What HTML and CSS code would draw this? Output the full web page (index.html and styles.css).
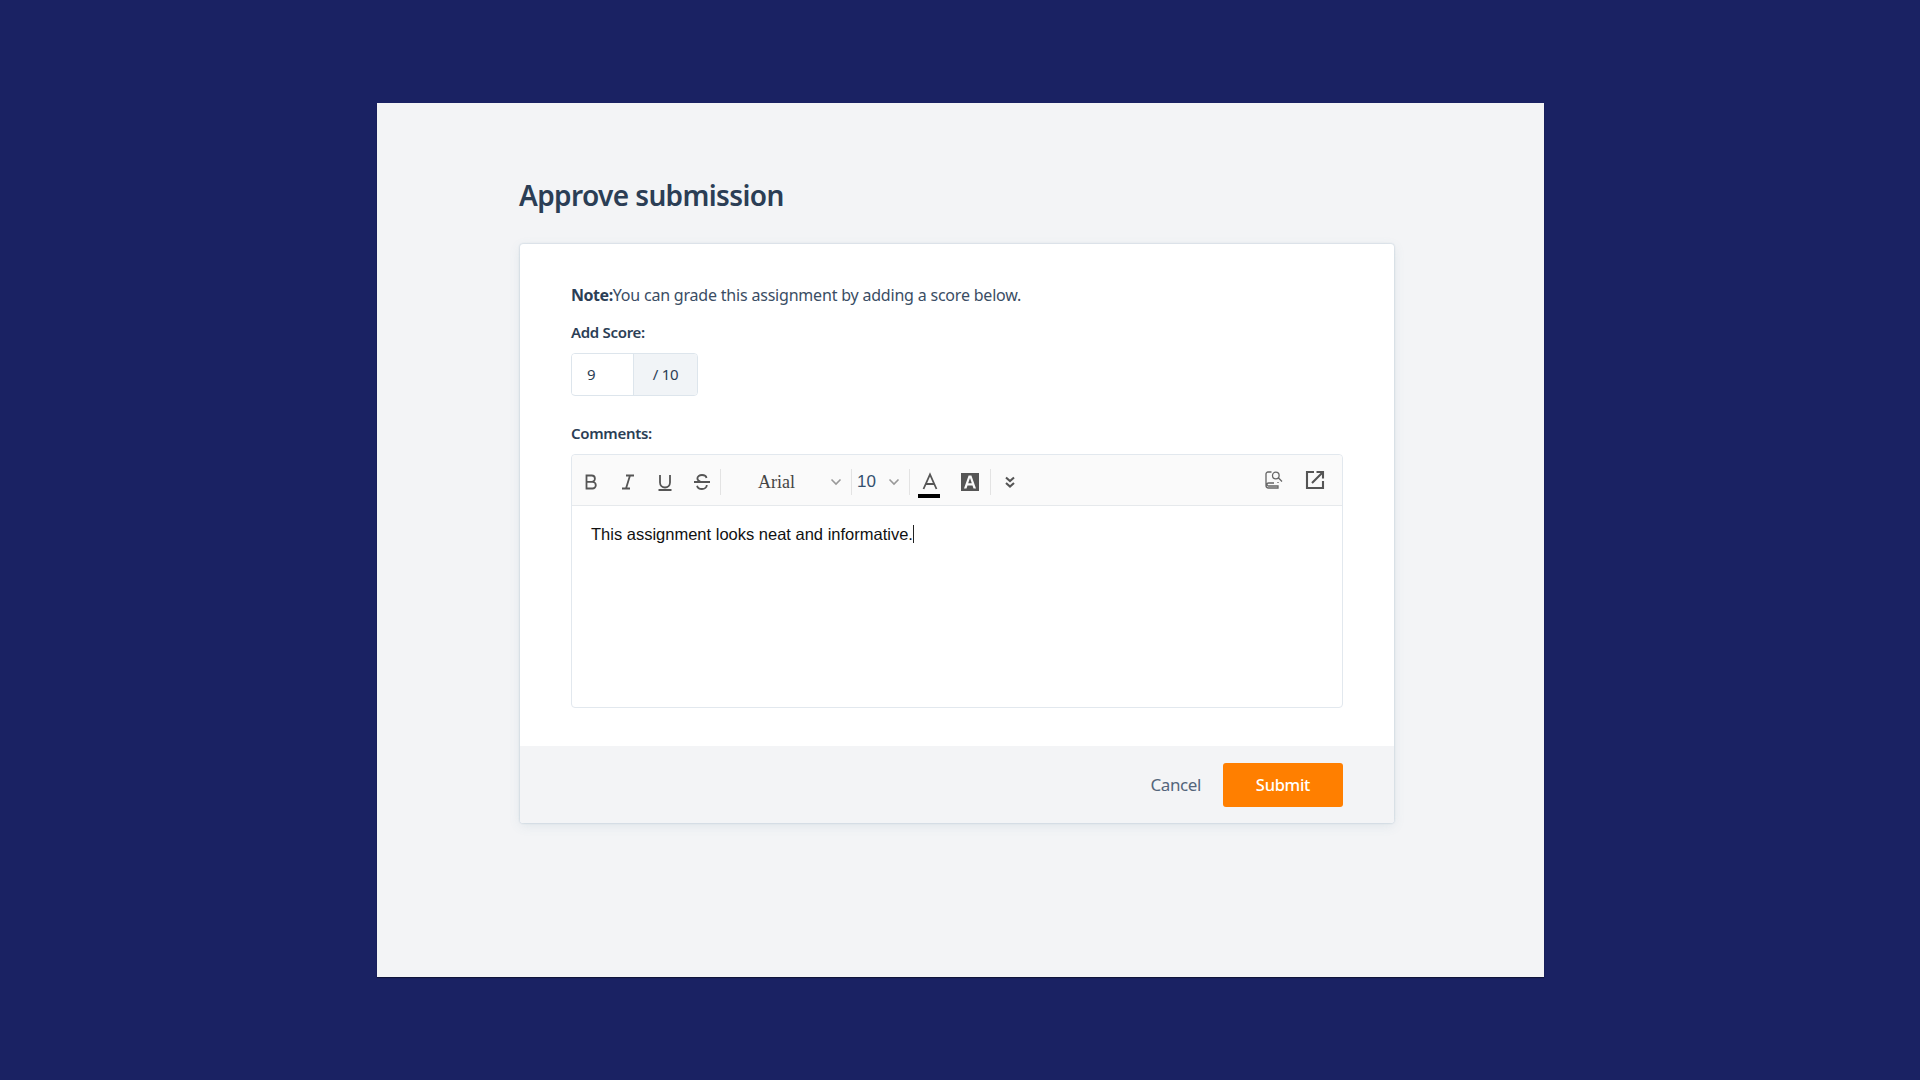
FILE: index.html
```html
<!DOCTYPE html>
<html lang="en">
<head>
  <meta charset="UTF-8">
  <title>Approve submission</title>
  <link rel="stylesheet" href="styles.css">
</head>
<body>
  <div class="frame">
    <h1>Approve submission</h1>

    <div class="card">
      <div class="card-body">
        <p class="note"><b>Note:</b>You can grade this assignment by adding a score below.</p>

        <label class="field-label" for="score">Add Score:</label>
        <div class="score-box">
          <input id="score" class="score-input" type="text" value="9">
          <span class="score-total">/ 10</span>
        </div>

        <label class="field-label comments-label">Comments:</label>
        <div class="editor">
          <div class="toolbar">
            <span class="tool">
              <svg width="20" height="20" viewBox="0 0 20 20"><path d="M5.500 3.500h5.200a3.200 3.200 0 0 1 0 6.400H5.500zM5.500 9.900h6a3.300 3.300 0 0 1 0 6.600h-6z"/></svg>
            </span>
            <span class="tool">
              <svg width="20" height="20" viewBox="0 0 20 20"><path d="M8 3.500h8M4 16.500h8M12 3.500l-4 13"/></svg>
            </span>
            <span class="tool">
              <svg width="20" height="20" viewBox="0 0 20 20"><path d="M5 3v7.500a5 5 0 0 0 10 0V3M3.500 18h13"/></svg>
            </span>
            <span class="tool">
              <svg width="20" height="20" viewBox="0 0 20 20"><path d="M14.500 6c-.3-1.700-2.200-3-4.500-3-2.600 0-4.600 1.400-4.600 3.300 0 1.500.9 2.600 3 3.200M14.800 13c0 2.300-2.100 4-4.800 4-2.500 0-4.500-1.300-4.900-3.300M2 10h16"/></svg>
            </span>
            <span class="sep"></span>

            <span class="select select-font">Arial
              <svg class="chev" width="12" height="8" viewBox="0 0 12 8"><path d="M1.500 1.500 6 6l4.500-4.500"/></svg>
            </span>
            <span class="sep"></span>
            <span class="select select-size">10
              <svg class="chev" width="12" height="8" viewBox="0 0 12 8"><path d="M1.500 1.500 6 6l4.500-4.500"/></svg>
            </span>
            <span class="sep"></span>

            <span class="tool tool-color">
              <svg width="20" height="20" viewBox="0 0 20 20"><path d="M3.500 17 10 2.500 16.500 17M5.800 12h8.400"/></svg>
              <span class="color-bar"></span>
            </span>
            <span class="tool tool-highlight">
              <svg width="18" height="18" viewBox="0 0 18 18"><path class="solid" fill-rule="evenodd" d="M0 0h18v18H0zM7.600 2.500 3 15.500h2.500l1-3h5l1 3H15L10.400 2.500zM7.200 10.300 9 5l1.800 5.300z"/></svg>
            </span>
            <span class="sep"></span>
            <span class="tool tool-more">
              <svg width="14" height="14" viewBox="0 0 14 14"><path class="thick" d="M3 2.500 7 6l4-3.500M3 8l4 3.500L11 8"/></svg>
            </span>

            <span class="toolbar-right">
              <svg class="book" width="20" height="20" viewBox="0 0 20 20"><path d="M7.500 2H4a2 2 0 0 0-2 2v11.500A2.500 2.500 0 0 0 4.500 18H14v-2H4.500a1 1 0 0 1 0-3H10M14 13v-1"/><circle cx="11.800" cy="5.500" r="3.300"/><path d="M14.300 7.800 18 11.500"/></svg>
              <svg width="20" height="20" viewBox="0 0 20 20"><path class="thick" d="M9 2H2v16h16v-7M7 13 18 2M11.500 2H18v6.500"/></svg>
            </span>
          </div>
          <div class="editor-text">This assignment looks neat and informative.<span class="caret"></span></div>
        </div>
      </div>

      <div class="card-footer">
        <a class="cancel" href="#">Cancel</a>
        <button class="submit" type="button">Submit</button>
      </div>
    </div>
  </div>
</body>
</html>
```

FILE: styles.css
```css
* {
  box-sizing: border-box;
}
body {
  margin: 0;
  height: 1080px;
  padding: 103px 376px 103px 377px;
  background-color: #1a2263;
  font-family: "Noto Sans", Arial, sans-serif;
  color: #2b3e55;
  overflow: hidden;
}
.frame {
  height: 874px;
  padding: 0 150px 0 143px;
  background: #f3f4f6;
  box-shadow: 0 1px 1px rgba(0, 0, 0, 0.4);
}
h1 {
  margin: 0 0 0 -1px;
  padding-top: 71px;
  height: 141px;
  font-size: 28px;
  line-height: 42px;
  font-weight: 600;
  letter-spacing: -0.62px;
}
.card {
  background: white;
  border-radius: 3px;
  box-shadow: 0 0 2px rgba(90, 130, 160, 0.45), 0 3px 12px rgba(90, 130, 160, 0.12);
}
.card-body {
  height: 502px;
  padding: 40px 51px 0 51px;
}
.note {
  margin: 0;
  font-size: 16px;
  line-height: 22px;
  letter-spacing: -0.2px;
  color: #3a4d64;
}
.note b {
  color: #2b3e55;
  letter-spacing: -0.45px;
}
.field-label {
  display: block;
  margin-top: 15px;
  font-size: 15px;
  line-height: 22px;
  font-weight: 600;
  letter-spacing: -0.3px;
}
.score-box {
  display: flex;
  width: 127px;
  height: 43px;
  margin-top: 10px;
  border: 1px solid #dde5ec;
  border-radius: 4px;
  overflow: hidden;
  font-size: 15px;
}
.score-input {
  width: 61px;
  height: 40px;
  border: none;
  padding: 0 0 0 15px;
  font: inherit;
  color: inherit;
  outline: none;
}
.score-total {
  flex: 1;
  display: flex;
  align-items: center;
  justify-content: center;
  padding-bottom: 2px;
  background: #f1f4f7;
  border-left: 1px solid #dde5ec;
  letter-spacing: -0.3px;
}
.comments-label {
  margin-top: 26px;
}
.editor {
  height: 254px;
  margin-top: 10px;
  border: 1px solid #e2e8ee;
  border-radius: 4px;
}
.toolbar {
  display: flex;
  align-items: center;
  height: 51px;
  padding: 4px 0 0 1px;
  background: #fafafa;
  border-bottom: 1px solid #e6e9ec;
  border-radius: 4px 4px 0 0;
}
.toolbar svg path,
.toolbar svg circle {
  fill: none;
  stroke: #555;
  stroke-width: 1.8;
}
.toolbar svg .thick {
  stroke-width: 2.1;
}
.toolbar svg .solid {
  fill: #555;
  stroke: none;
}
.toolbar .book path,
.toolbar .book circle {
  stroke: #666;
  stroke-width: 1.3;
}
.tool {
  display: flex;
  align-items: center;
  justify-content: center;
  flex: none;
  width: 36.75px;
  height: 26px;
}
.tool-color {
  position: relative;
  width: 39px;
}
.color-bar {
  position: absolute;
  left: 8px;
  bottom: -3px;
  width: 22px;
  height: 4px;
  background: #000;
}
.tool-highlight {
  width: 41px;
}
.tool-more {
  width: 38px;
}
.sep {
  flex: none;
  width: 1px;
  height: 26px;
  background: #e3e3e3;
}
.select {
  display: flex;
  align-items: center;
  justify-content: space-between;
  flex: none;
  height: 26px;
}
.select-font {
  width: 130px;
  padding: 0 9px 0 37px;
  font-family: "Liberation Serif", serif;
  font-size: 18px;
  color: #444;
}
.select-size {
  width: 57px;
  padding: 0 9px 0 5px;
  font-family: "Liberation Sans", sans-serif;
  font-size: 17px;
  color: #34506e;
}
.toolbar .chev path {
  stroke: #999;
  stroke-width: 1.6;
}
.toolbar-right {
  display: flex;
  gap: 21px;
  margin-left: auto;
  margin-right: 17px;
  padding-bottom: 5px;
}
.editor-text {
  padding: 17px 19px;
  font-family: "Liberation Sans", Arial, sans-serif;
  font-size: 16.5px;
  line-height: 22px;
  color: #111;
}
.caret {
  display: inline-block;
  width: 1px;
  height: 18px;
  vertical-align: -3px;
  background: #222;
}
.card-footer {
  display: flex;
  align-items: center;
  justify-content: flex-end;
  gap: 22px;
  height: 77px;
  padding: 0 51px 0 0;
  background: #f3f4f6;
  border-radius: 0 0 3px 3px;
}
.cancel {
  color: #53657b;
  font-size: 17px;
  letter-spacing: -0.4px;
  text-decoration: none;
}
.submit {
  width: 120px;
  height: 44px;
  border: none;
  border-radius: 3px;
  background: #ff7f00;
  color: white;
  font-family: inherit;
  font-size: 16.5px;
  font-weight: 500;
  letter-spacing: -0.3px;
}
```
